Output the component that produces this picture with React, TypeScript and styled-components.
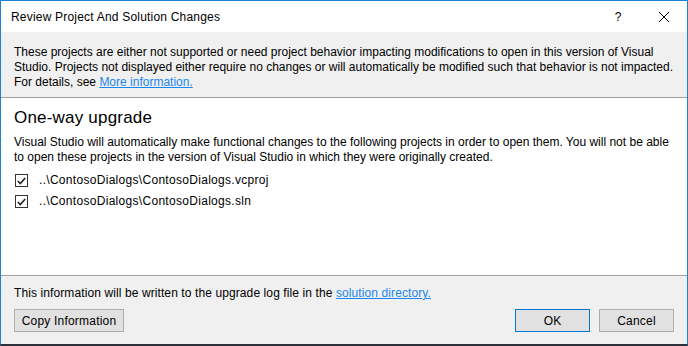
import React, { FC } from "react";
import styled, { createGlobalStyle } from "styled-components";

const GlobalStyle = createGlobalStyle`
    html, body {
        margin: 0;
        padding: 0;
        background: #ffffff;
    }
    * {
        box-sizing: border-box;
    }
`;

const Window = styled.div`
    width: 688px;
    height: 346px;
    display: flex;
    flex-direction: column;
    border: 1px solid #1883d7;
    border-bottom: 2px solid #2b3138;
    background-color: #ffffff;
    font-family: "Segoe UI", "Liberation Sans", Arial, sans-serif;
    font-size: 12px;
    color: #000000;
    white-space: nowrap;
    overflow: hidden;
`;

const TitleBar = styled.div`
    display: flex;
    flex-direction: row;
    align-items: center;
    height: 31px;
    flex-shrink: 0;
    padding-left: 10px;
`;

const Title = styled.div`
    flex: 1;
    font-size: 12px;
    line-height: 16px;
    letter-spacing: 0.2px;
`;

const CaptionButton = styled.div`
    width: 46px;
    height: 31px;
    display: flex;
    justify-content: center;
    align-items: center;
    font-size: 12px;
`;

const InfoBand = styled.div`
    background-color: #f0f0f0;
    padding: 13px 13px 7px;
    border-bottom: 1px solid #a0a0a0;
    line-height: 15px;
    flex-shrink: 0;
`;

const Link = styled.a`
    color: #1c86ee;
    text-decoration: underline;
    cursor: pointer;
`;

const Content = styled.div`
    flex: 1;
    padding: 8px 12px 0;
`;

const Heading = styled.div`
    font-size: 17px;
    line-height: 24px;
    letter-spacing: 0.2px;
    padding-left: 1px;
`;

const Paragraph = styled.div`
    margin-top: 5px;
    line-height: 15px;
    padding-left: 1px;
`;

const CheckList = styled.div`
    display: flex;
    flex-direction: column;
    gap: 8px;
    margin-top: 9px;
    padding-left: 2px;
`;

const CheckRow = styled.label`
    display: flex;
    flex-direction: row;
    align-items: center;
    gap: 11px;
    height: 13px;
    line-height: 15px;
    letter-spacing: 0.3px;
`;

const Box = styled.span`
    width: 13px;
    height: 13px;
    border: 1px solid #333333;
    background-color: #ffffff;
    display: flex;
    justify-content: center;
    align-items: center;
`;

const Footer = styled.div`
    background-color: #f0f0f0;
    border-top: 1px solid #a0a0a0;
    padding: 10px 13px 12px;
    flex-shrink: 0;
`;

const FooterText = styled.div`
    line-height: 15px;
    letter-spacing: 0.1px;
`;

const ButtonRow = styled.div`
    display: flex;
    flex-direction: row;
    align-items: center;
    margin-top: 8px;
    gap: 9px;
`;

const Spacer = styled.div`
    flex: 1;
`;

const Button = styled.button<{ $width: number; $primary?: boolean }>`
    width: ${p => p.$width}px;
    height: 23px;
    padding: 0;
    background-color: #e1e1e1;
    border: 1px solid ${p => (p.$primary ? "#0078d7" : "#adadad")};
    font-family: inherit;
    font-size: 12px;
    letter-spacing: 0.2px;
    color: #000000;
    cursor: pointer;
`;

const CheckMark: FC = () => (
    <svg width="9" height="8" viewBox="0 0 9 8">
        <path d="M0.8 4 L3.3 6.5 L8.2 1" fill="none" stroke="#222222" strokeWidth="1.6" />
    </svg>
);

const CloseIcon: FC = () => (
    <svg width="10" height="10" viewBox="0 0 10 10">
        <path d="M0 0 L10 10 M10 0 L0 10" stroke="#000000" strokeWidth="1" />
    </svg>
);

const projects = [
    "..\\ContosoDialogs\\ContosoDialogs.vcproj",
    "..\\ContosoDialogs\\ContosoDialogs.sln",
];

const App: FC = () => {
    return (
        <>
            <GlobalStyle />
            <Window>
                <TitleBar>
                    <Title>Review Project And Solution Changes</Title>
                    <CaptionButton>?</CaptionButton>
                    <CaptionButton>
                        <CloseIcon />
                    </CaptionButton>
                </TitleBar>
                <InfoBand>
                    These projects are either not supported or need project behavior impacting modifications to open in this version of Visual
                    <br />
                    Studio. Projects not displayed either require no changes or will automatically be modified such that behavior is not impacted.
                    <br />
                    For details, see <Link>More information.</Link>
                </InfoBand>
                <Content>
                    <Heading>One-way upgrade</Heading>
                    <Paragraph>
                        Visual Studio will automatically make functional changes to the following projects in order to open them. You will not be able
                        <br />
                        to open these projects in the version of Visual Studio in which they were originally created.
                    </Paragraph>
                    <CheckList>
                        {projects.map((item, index) => (
                            <CheckRow key={index}>
                                <Box>
                                    <CheckMark />
                                </Box>
                                <span>{item}</span>
                            </CheckRow>
                        ))}
                    </CheckList>
                </Content>
                <Footer>
                    <FooterText>
                        This information will be written to the upgrade log file in the <Link>solution directory.</Link>
                    </FooterText>
                    <ButtonRow>
                        <Button $width={110}>Copy Information</Button>
                        <Spacer />
                        <Button $width={75} $primary>OK</Button>
                        <Button $width={75}>Cancel</Button>
                    </ButtonRow>
                </Footer>
            </Window>
        </>
    );
};

export default App;
